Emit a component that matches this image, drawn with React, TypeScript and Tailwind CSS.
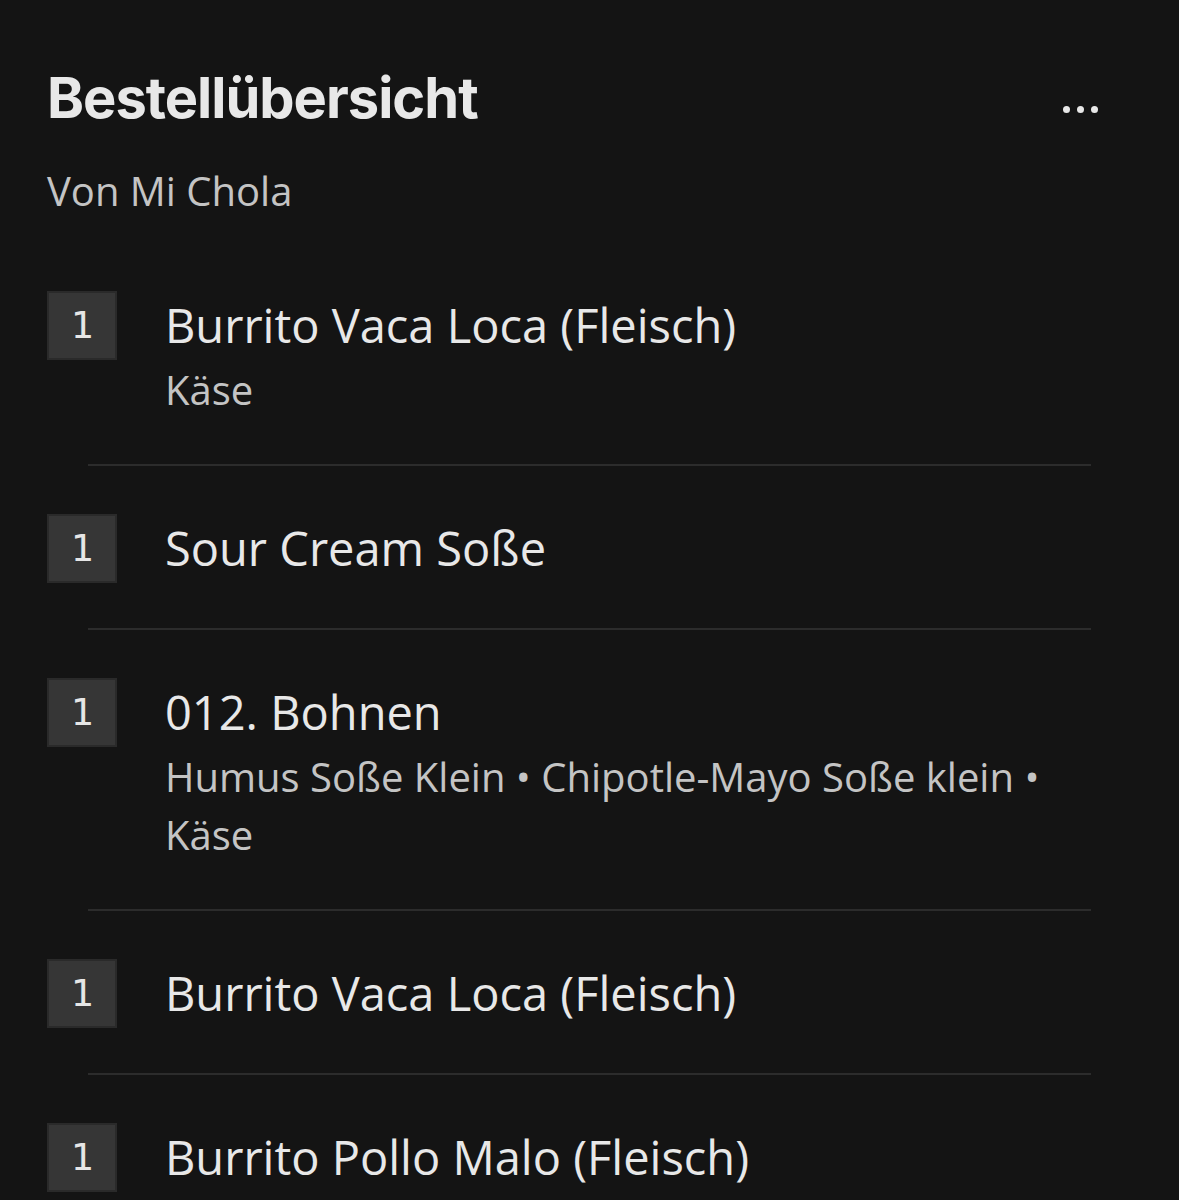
const items = [
  { qty: 1, name: 'Burrito Vaca Loca (Fleisch)', extras: 'Käse' },
  { qty: 1, name: 'Sour Cream Soße' },
  { qty: 1, name: '012. Bohnen', extras: 'Humus Soße Klein • Chipotle-Mayo Soße klein • Käse' },
  { qty: 1, name: 'Burrito Vaca Loca (Fleisch)' },
  { qty: 1, name: 'Burrito Pollo Malo (Fleisch)' },
];

function QtyBox({ qty }: { qty: number }) {
  return (
    <div className="w-[70px] h-[69px] shrink-0 bg-[#363636] border-2 border-[#2a2a2a] flex items-center justify-center text-[38px] text-[#e6e6e6] font-['DejaVu_Sans_Mono',monospace]">
      {qty}
    </div>
  );
}

export default function App() {
  return (
    <div className="min-h-[1200px] bg-[#141414] pl-[47px] pr-[88px] pt-[68px] font-['Open_Sans',sans-serif]">
      <div className="flex items-center justify-between">
        <h1 className="text-[56px] leading-[60px] font-bold tracking-[-1px] text-[#e8e8e8] font-['Inter',sans-serif]">
          Bestellübersicht
        </h1>
        <div className="flex gap-[7px] mr-[-7px] mt-[22px]">
          <span className="w-[7px] h-[7px] rounded-full bg-[#e8e8e8]" />
          <span className="w-[7px] h-[7px] rounded-full bg-[#e8e8e8]" />
          <span className="w-[7px] h-[7px] rounded-full bg-[#e8e8e8]" />
        </div>
      </div>
      <p className="mt-[41px] text-[40px] leading-[44px] text-[#c4c4c4]">Von Mi Chola</p>

      <ul className="mt-[78px]">
        {items.map((item, i) => (
          <li key={i}>
            <div className={`flex gap-[48px] ${i > 0 ? 'pt-[48px]' : ''} pb-[45px]`}>
              <QtyBox qty={item.qty} />
              <div className="min-w-0">
                <div className="text-[47px] leading-[68px] text-[#e8e8e8]">{item.name}</div>
                {item.extras && (
                  <div className="mt-[2px] text-[40px] leading-[58px] text-[#c4c4c4] max-w-[890px]">{item.extras}</div>
                )}
              </div>
            </div>
            {i < items.length - 1 && <div className="ml-[41px] h-[2px] bg-[#2c2c2c]" />}
          </li>
        ))}
      </ul>
    </div>
  );
}
